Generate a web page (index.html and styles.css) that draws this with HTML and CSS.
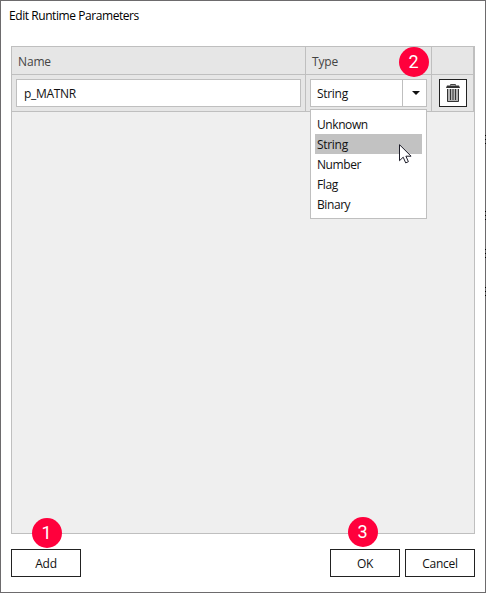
FILE: index.html
```html
<!DOCTYPE html>
<html lang="en">
<head>
<meta charset="utf-8">
<title>Edit Runtime Parameters</title>
<link rel="stylesheet" href="styles.css">
</head>
<body>
<main class="dialog">
  <h1 class="title">Edit Runtime Parameters</h1>
  <section class="grid">
    <div class="row head">
      <div class="cell">Name</div>
      <div class="cell">Type</div>
      <div class="cell"></div>
    </div>
    <div class="row entry">
      <div class="cell"><div class="input">p_MATNR</div></div>
      <div class="cell">
        <div class="combo">
          <span class="value">String</span>
          <span class="toggle"><svg width="8" height="4" viewBox="0 0 8 4"><path d="M0 0h8L4 4z" fill="#111"/></svg></span>
          <ul class="menu">
            <li>Unknown</li>
            <li class="selected">String</li>
            <li>Number</li>
            <li>Flag</li>
            <li>Binary</li>
          </ul>
        </div>
      </div>
      <div class="cell">
        <button class="trash" aria-label="Delete">
          <svg width="14" height="18" viewBox="0 0 14 18">
            <path d="M4.500 1.500V.5h5v1" fill="none" stroke="#444"/>
            <path d="M1 1.500h12l1 2.500H0z" fill="#333"/>
            <path d="M1 5h12v12.500H1z" fill="#b5b5b5"/>
            <path d="M1.500 5v12.500h11V5M4.500 5v11M7 5v11M9.500 5v11" fill="none" stroke="#333"/>
          </svg>
        </button>
      </div>
    </div>
  </section>
  <footer class="actions">
    <button class="button add">Add</button>
    <button class="button">OK</button>
    <button class="button">Cancel</button>
  </footer>
  <span class="badge one">1</span>
  <span class="badge two">2</span>
  <span class="badge three">3</span>
  <svg class="cursor" width="14" height="21" viewBox="0 0 14 21"><path d="M.5.7v16l3.700-3.500 2.500 5.700 2.700-1.200-2.500-5.500h5.200z" fill="#fff" stroke="#1c1c28"/></svg>
  <svg class="edge" width="1" height="170" viewBox="0 0 1 170"><path d="M.5 0v9M.5 76v9M.5 114v9M.5 152v9" stroke="#000" stroke-dasharray="1 3"/></svg>
</main>
</body>
</html>
```
FILE: styles.css
```css
* { box-sizing: border-box; }
body {
  margin: 0;
  font: 12px/16px "Open Sans", "Noto Sans", sans-serif;
  letter-spacing: -0.3px;
  color: #111;
}
.dialog {
  position: relative;
  display: flex;
  flex-direction: column;
  width: 486px;
  height: 593px;
  padding: 7px 10px 15px;
  border: 1px solid #6d6b6d;
  background: #fff;
}
.title {
  margin: 0 0 22px -2px;
  font-size: 12px;
  font-weight: 400;
  line-height: 16px;
  letter-spacing: -0.43px;
  color: #000;
}
.grid {
  width: 464px;
  height: 488px;
  border: 1px solid #bfbfbf;
  background: #efefef;
}
.row {
  display: grid;
  grid-template-columns: 294px 126px 42px;
  background: #e6e6e6;
  border-bottom: 1px solid #bfbfbf;
}
.cell { border-right: 1px solid #bfbfbf; }
.head { height: 28px; color: #444; letter-spacing: -0.15px; }
.head .cell { padding: 7px 6px 0; }
.entry { height: 37px; }
.entry .cell { padding: 4px; }
.input {
  width: 285px;
  height: 28px;
  padding: 6px 7px;
  border: 1px solid #bfbfbf;
  background: #fff;
}
.combo {
  position: relative;
  display: flex;
  width: 117px;
  height: 28px;
  border: 1px solid #bfbfbf;
  background: #fff;
}
.value { flex: 1; padding: 6px; }
.toggle {
  display: flex;
  align-items: center;
  justify-content: center;
  width: 24px;
  padding-left: 2px;
  border-left: 1px solid #bfbfbf;
}
.menu {
  position: absolute;
  z-index: 1;
  top: 29px;
  left: -1px;
  width: 117px;
  height: 110px;
  margin: 0;
  padding: 4px;
  border: 1px solid #bfbfbf;
  background: #fff;
  list-style: none;
  letter-spacing: -0.42px;
}
.menu li { height: 20px; padding: 3px 2px 1px; }
.menu .selected { background: #c2c2c2; letter-spacing: -0.3px; }
.trash {
  display: flex;
  align-items: center;
  justify-content: center;
  width: 28px;
  height: 28px;
  margin-left: 3px;
  padding: 0;
  border: 1px solid #222;
  background: #fff;
}
.actions {
  display: flex;
  gap: 5px;
  width: 464px;
  margin-top: 15px;
}
.button {
  width: 70px;
  height: 28px;
  padding: 1px 0 0;
  border: 1px solid #222;
  border-radius: 0;
  background: #fff;
  color: #111;
  font: inherit;
  letter-spacing: inherit;
}
.add { margin-right: auto; }
.badge {
  position: absolute;
  z-index: 2;
  width: 30px;
  height: 30px;
  border-radius: 50%;
  background: #ff003c;
  color: #fff;
  font: 18px/29px Roboto, sans-serif;
  letter-spacing: 0;
  text-align: center;
}
.one { left: 30.5px; top: 516.5px; }
.two { left: 397.5px; top: 45.5px; }
.three { left: 346.5px; top: 515.5px; }
.cursor { position: absolute; z-index: 3; left: 398px; top: 143px; }
.edge { position: absolute; left: 484px; top: 134px; }
```
